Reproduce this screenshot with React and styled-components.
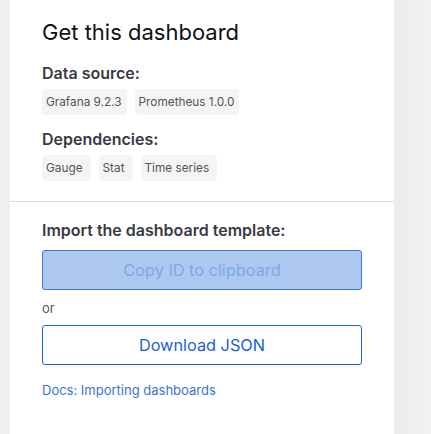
import React from 'react'
import styled, { createGlobalStyle } from 'styled-components'

const GlobalStyle = createGlobalStyle`
    body {
        margin: 0;
        background: #efefef;
        font-family: Inter, "Noto Sans", sans-serif;
    }
`

const dataSources = ['Grafana 9.2.3', 'Prometheus 1.0.0']
const dependencies = ['Gauge', 'Stat', 'Time series']

export default function App() {
    return (
        <Page>
            <GlobalStyle />
            <Card>
                <Section>
                    <Title>Get this dashboard</Title>
                    <Label>Data source:</Label>
                    <Tags>
                        {dataSources.map(t => <Tag key={t}>{t}</Tag>)}
                    </Tags>
                    <Label>Dependencies:</Label>
                    <Tags>
                        {dependencies.map(t => <Tag key={t} $wide>{t}</Tag>)}
                    </Tags>
                </Section>
                <Divider />
                <Section $lower>
                    <Label>Import the dashboard template:</Label>
                    <Button $disabled>Copy ID to clipboard</Button>
                    <Or>or</Or>
                    <Button>Download JSON</Button>
                    <DocsLink href="#">Docs: Importing dashboards</DocsLink>
                </Section>
            </Card>
            <Side />
        </Page>
    )
}

const Page = styled.div`
    display: flex;
    min-height: 434px;
    padding-left: 10px;
`

const Card = styled.div`
    width: 384px;
    background: #fff;
    display: flex;
    flex-direction: column;
`

const Side = styled.div`
    flex: 1;
    background: linear-gradient(90deg, #ececec, #f1f1f1);
`

const Section = styled.div`
    display: flex;
    flex-direction: column;
    padding: ${p => p.$lower ? '17px 32px 20px' : '18px 32px 20px'};
`

const Title = styled.h2`
    margin: 0 0 16px;
    font-size: 22px;
    line-height: 28px;
    font-weight: 400;
    color: #111;
`

const Label = styled.div`
    font-size: 16px;
    line-height: 22px;
    font-weight: 600;
    color: #3a3a45;
    margin-bottom: 5px;
`

const Tags = styled.div`
    display: flex;
    gap: 8px;
    margin-bottom: 13px;
    &:last-child {
        margin-bottom: 0;
    }
`

const Tag = styled.span`
    background: #f4f4f5;
    border-radius: 4px;
    padding: ${p => p.$wide ? '0 8px 0 4px' : '0 5px 0 4px'};
    height: 26px;
    line-height: 26px;
    font-size: 11.8px;
    color: #555;
`

const Divider = styled.hr`
    margin: 0;
    border: 0;
    border-top: 1px solid #d8d8d8;
`

const Button = styled.button`
    height: 40px;
    border-radius: 3px;
    font-family: inherit;
    font-size: 16.3px;
    border: 1px solid ${p => p.$disabled ? '#3b78dc' : '#1d5fdc'};
    background: ${p => p.$disabled ? '#adc8ef' : '#fff'};
    color: ${p => p.$disabled ? '#7ea8e8' : '#1d5fd6'};
    margin-top: 4px;
`

const Or = styled.div`
    font-size: 13px;
    color: #555;
    line-height: 18px;
    margin: 9px 0 4px;
`

const DocsLink = styled.a`
    margin-top: 16px;
    font-size: 13px;
    line-height: 18px;
    color: #3a72d8;
    text-decoration: none;
`
